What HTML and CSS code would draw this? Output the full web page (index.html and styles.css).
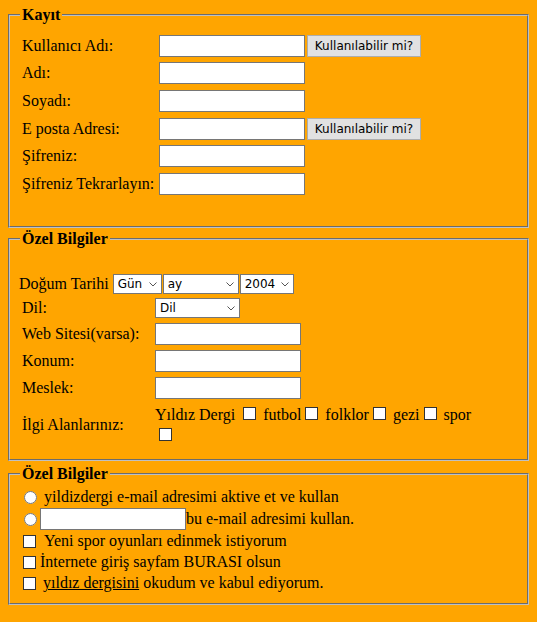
FILE: index.html
```html
<!DOCTYPE html>
<html lang="tr">
<head>
<meta charset="utf-8">
<title>Kayıt</title>
<link rel="stylesheet" href="styles.css">
</head>
<body>
<form class="form">
  <fieldset class="box box-account">
    <legend class="box-title">Kayıt</legend>
    <div class="rows">
      <div class="row">
        <label class="lbl">Kullanıcı Adı:</label>
        <input class="txt" type="text">
        <button class="btn" type="button">Kullanılabilir mi?</button>
      </div>
      <div class="row">
        <label class="lbl">Adı:</label>
        <input class="txt" type="text">
      </div>
      <div class="row">
        <label class="lbl">Soyadı:</label>
        <input class="txt" type="text">
      </div>
      <div class="row">
        <label class="lbl">E posta Adresi:</label>
        <input class="txt" type="text">
        <button class="btn" type="button">Kullanılabilir mi?</button>
      </div>
      <div class="row">
        <label class="lbl">Şifreniz:</label>
        <input class="txt" type="password">
      </div>
      <div class="row">
        <label class="lbl">Şifreniz Tekrarlayın:</label>
        <input class="txt" type="password">
      </div>
    </div>
  </fieldset>

  <fieldset class="box box-private">
    <legend class="box-title">Özel Bilgiler</legend>
    <div class="dob">
      <span class="dob-label">Doğum Tarihi</span>
      <span class="sel sel-day">
        <select><option>Gün</option></select>
        <svg class="chev" width="8" height="5" viewBox="0 0 8 5"><polyline points="0.5,0.5 4,4 7.5,0.5" fill="none" stroke="#555" stroke-width="1"/></svg>
      </span>
      <span class="sel sel-month">
        <select><option>ay</option></select>
        <svg class="chev" width="8" height="5" viewBox="0 0 8 5"><polyline points="0.5,0.5 4,4 7.5,0.5" fill="none" stroke="#555" stroke-width="1"/></svg>
      </span>
      <span class="sel sel-year">
        <select><option>2004</option></select>
        <svg class="chev" width="8" height="5" viewBox="0 0 8 5"><polyline points="0.5,0.5 4,4 7.5,0.5" fill="none" stroke="#555" stroke-width="1"/></svg>
      </span>
    </div>
    <div class="grid">
      <label class="lbl">Dil:</label>
      <span class="sel sel-lang">
        <select><option>Dil</option></select>
        <svg class="chev" width="8" height="5" viewBox="0 0 8 5"><polyline points="0.5,0.5 4,4 7.5,0.5" fill="none" stroke="#555" stroke-width="1"/></svg>
      </span>
      <label class="lbl">Web Sitesi(varsa):</label>
      <input class="txt" type="text">
      <label class="lbl">Konum:</label>
      <input class="txt" type="text">
      <label class="lbl">Meslek:</label>
      <input class="txt" type="text">
      <label class="lbl">İlgi Alanlarınız:</label>
      <div class="interests">Yıldız Dergi <input class="cb cb-inline" type="checkbox"> futbol<input class="cb cb-inline" type="checkbox"> folklor<input class="cb cb-inline" type="checkbox"> gezi<input class="cb cb-inline" type="checkbox"> spor <input class="cb cb-inline" type="checkbox"></div>
    </div>
  </fieldset>

  <fieldset class="box box-options">
    <legend class="box-title">Özel Bilgiler</legend>
    <div class="opt opt-1">
      <input class="radio" type="radio" name="mail">
      <span class="t-radio">yildizdergi e-mail adresimi aktive et ve kullan</span>
    </div>
    <div class="opt opt-2">
      <input class="radio" type="radio" name="mail">
      <input class="txt txt-mail" type="text">
      <span>bu e-mail adresimi kullan.</span>
    </div>
    <div class="opt">
      <input class="cb cb-row" type="checkbox">
      <span class="t-cb1">Yeni spor oyunları edinmek istiyorum</span>
    </div>
    <div class="opt">
      <input class="cb cb-row" type="checkbox">
      <span class="t-cb2">İnternete giriş sayfam BURASI olsun</span>
    </div>
    <div class="opt">
      <input class="cb cb-row" type="checkbox">
      <span class="t-cb3"><a class="link" href="#">yıldız dergisini</a> okudum ve kabul ediyorum.</span>
    </div>
  </fieldset>
</form>
</body>
</html>
```

FILE: styles.css
```css
html, body {
  background: #ffa500;
}

body {
  margin: 6px 8px;
  font-family: "Liberation Serif", "Times New Roman", serif;
  font-size: 16px;
  color: #000;
}

.form {
  margin: 0;
}

.box {
  margin: 0;
  min-width: 0;
  border: 2px groove #c0c0c0;
}

.box-title {
  padding: 0 2px;
  margin-left: -2px;
  font-weight: bold;
  line-height: 18px;
}

.lbl {
  line-height: 18px;
  white-space: nowrap;
}

/* ---------- text inputs / buttons ---------- */
.txt {
  box-sizing: border-box;
  width: 146px;
  height: 22px;
  margin: 0;
  padding: 0 2px;
  border: 1px solid #767676;
  border-radius: 0;
  background: #fff;
  font: 13px "DejaVu Sans", sans-serif;
}

.btn {
  box-sizing: border-box;
  width: 114px;
  height: 22px;
  margin: 0 0 0 2px;
  padding: 0;
  border: 1px solid #adadad;
  border-radius: 0;
  background: #e1e1e1;
  color: #000;
  font: 12px "DejaVu Sans", sans-serif;
}

/* ---------- checkboxes ---------- */
.cb {
  -webkit-appearance: none;
  appearance: none;
  box-sizing: border-box;
  width: 13px;
  height: 13px;
  border: 1px solid #333;
  border-radius: 0;
  background: #fff;
}

/* ---------- selects ---------- */
.sel {
  position: relative;
  display: inline-block;
  height: 20px;
}

.sel select {
  -webkit-appearance: none;
  appearance: none;
  box-sizing: border-box;
  width: 100%;
  height: 20px;
  margin: 0;
  padding: 0 0 0 4px;
  border: 1px solid #767676;
  border-radius: 0;
  background: #fff;
  color: #000;
  font: 12px "DejaVu Sans", sans-serif;
}

.chev {
  position: absolute;
  right: 5px;
  top: 8px;
  pointer-events: none;
}

.sel-day { width: 49px; }
.sel-month { width: 76px; }
.sel-year { width: 54px; }
.sel-lang { width: 85px; }

/* ---------- box 1 ---------- */
.box-account {
  padding: 9px 12px 29px;
}

.rows {
  display: flex;
  flex-direction: column;
  gap: 2px;
}

.row {
  display: flex;
  align-items: center;
  height: 25.6px;
}

.row .lbl {
  width: 137px;
  flex: none;
}

/* ---------- box 2 ---------- */
.box-private {
  margin-top: 2px;
  padding: 26px 12px 13px;
}

.dob {
  display: flex;
  align-items: center;
  gap: 1px;
  height: 20px;
  margin-left: -3px;
}

.dob-label {
  line-height: 18px;
  margin-right: 3px;
}

.grid {
  display: grid;
  grid-template-columns: 133px auto;
  justify-content: start;
  align-items: center;
  row-gap: 5px;
  margin-top: 4px;
}

.grid .sel,
.grid .txt {
  justify-self: start;
}

.interests {
  width: 330px;
  line-height: 21px;
}

.cb-inline {
  margin: 0 3px 0 4px;
  vertical-align: baseline;
}

/* ---------- box 3 ---------- */
.box-options {
  margin-top: 4px;
  padding: 4px 12px 9px;
}

.opt {
  display: flex;
  align-items: center;
  height: 21px;
  line-height: 18px;
  white-space: nowrap;
}

.opt-2 {
  height: 23px;
}

.radio {
  width: 13px;
  height: 13px;
  margin: 0 0 0 2px;
  flex: none;
}

.cb-row {
  margin: 0 0 0 1px;
  flex: none;
}

.t-radio { margin-left: 7px; }
.txt-mail { margin-left: 3px; }
.t-cb1 { margin-left: 8px; }
.t-cb2 { margin-left: 4px; }
.t-cb3 { margin-left: 7px; }

.link {
  color: inherit;
  text-decoration: underline;
}
```
